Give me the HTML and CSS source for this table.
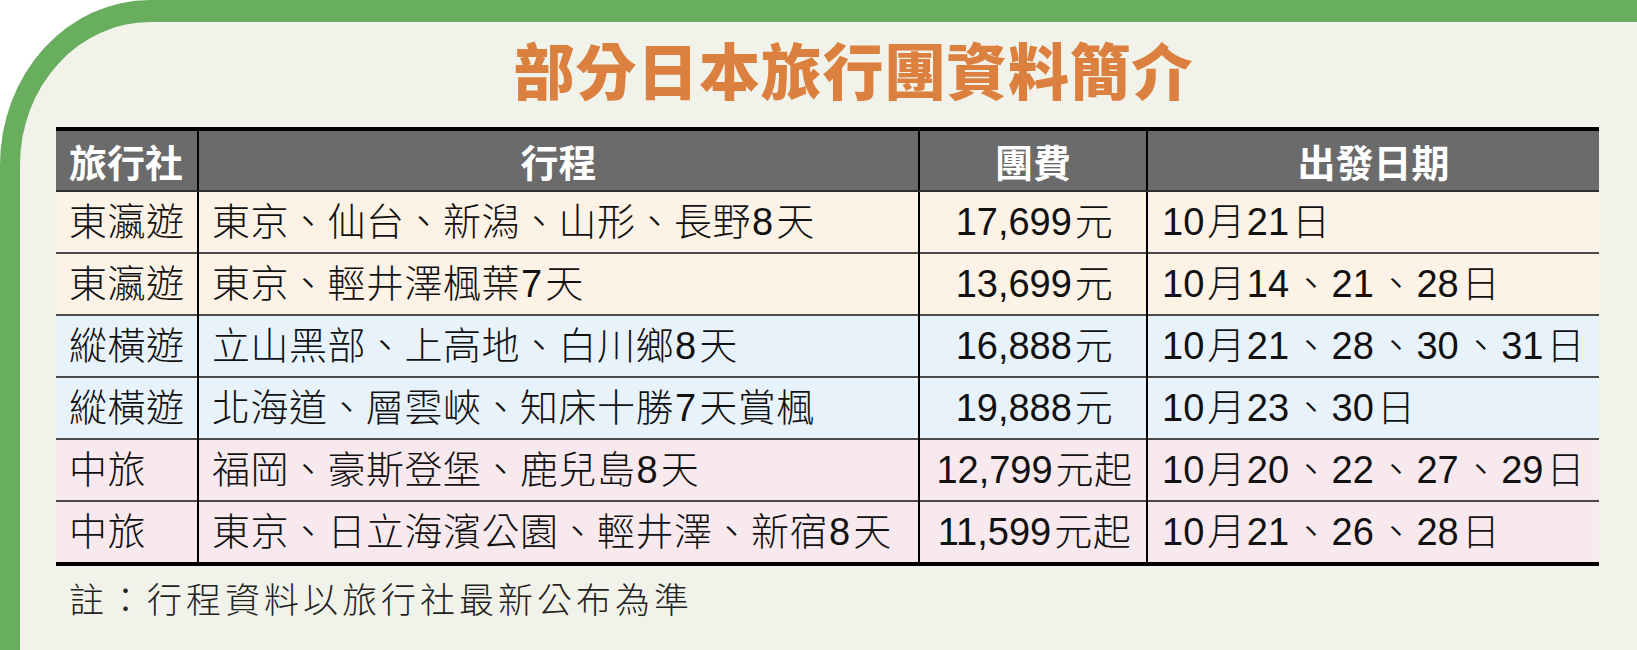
FILE: index.html
```html
<!DOCTYPE html>
<html lang="zh-Hant">
<head>
<meta charset="utf-8">
<title>部分日本旅行團資料簡介</title>
<link rel="stylesheet" href="styles.css">
</head>
<body>
<div class="frame">
  <h1 class="title">部分日本旅行團資料簡介</h1>
  <table class="tours">
    <colgroup>
      <col class="c-agency">
      <col class="c-route">
      <col class="c-fee">
      <col class="c-date">
    </colgroup>
    <thead>
      <tr>
        <th class="left">旅行社</th>
        <th>行程</th>
        <th>團費</th>
        <th>出發日期</th>
      </tr>
    </thead>
    <tbody>
      <tr class="cream">
        <td>東瀛遊</td>
        <td>東京、仙台、新潟、山形、長野<span class="n">8</span>天</td>
        <td class="fee"><span class="n">17,699</span>元</td>
        <td><span class="n">10</span>月<span class="n">21</span>日</td>
      </tr>
      <tr class="cream">
        <td>東瀛遊</td>
        <td>東京、輕井澤楓葉<span class="n">7</span>天</td>
        <td class="fee"><span class="n">13,699</span>元</td>
        <td><span class="n">10</span>月<span class="n">14</span>、<span class="n">21</span>、<span class="n">28</span>日</td>
      </tr>
      <tr class="blue">
        <td>縱橫遊</td>
        <td>立山黑部、上高地、白川鄉<span class="n">8</span>天</td>
        <td class="fee"><span class="n">16,888</span>元</td>
        <td><span class="n">10</span>月<span class="n">21</span>、<span class="n">28</span>、<span class="n">30</span>、<span class="n">31</span>日</td>
      </tr>
      <tr class="blue">
        <td>縱橫遊</td>
        <td>北海道、層雲峽、知床十勝<span class="n">7</span>天賞楓</td>
        <td class="fee"><span class="n">19,888</span>元</td>
        <td><span class="n">10</span>月<span class="n">23</span>、<span class="n">30</span>日</td>
      </tr>
      <tr class="pink">
        <td>中旅</td>
        <td>福岡、豪斯登堡、鹿兒島<span class="n">8</span>天</td>
        <td class="fee"><span class="n">12,799</span>元起</td>
        <td><span class="n">10</span>月<span class="n">20</span>、<span class="n">22</span>、<span class="n">27</span>、<span class="n">29</span>日</td>
      </tr>
      <tr class="pink">
        <td>中旅</td>
        <td>東京、日立海濱公園、輕井澤、新宿<span class="n">8</span>天</td>
        <td class="fee"><span class="n">11,599</span>元起</td>
        <td><span class="n">10</span>月<span class="n">21</span>、<span class="n">26</span>、<span class="n">28</span>日</td>
      </tr>
    </tbody>
  </table>
  <p class="note">註：行程資料以旅行社最新公布為準</p>
</div>
</body>
</html>
```

FILE: styles.css
```css
html, body {
  margin: 0;
  padding: 0;
  background: #ffffff;
}

body {
  width: 1637px;
  height: 650px;
  overflow: hidden;
  font-family: "Liberation Sans", "Noto Sans CJK TC", sans-serif;
}

.frame {
  box-sizing: border-box;
  width: 1637px;
  height: 650px;
  background: #f1f3ea;
  border-top: 22px solid #69ae5f;
  border-left: 20px solid #69ae5f;
  border-top-left-radius: 150px 165px;
  padding: 16px 38px 0 36px;
}

.title {
  margin: 0 0 27px 0;
  height: 62px;
  font-family: "Noto Sans CJK TC", sans-serif;
  font-weight: 900;
  font-size: 61px;
  line-height: 62px;
  letter-spacing: 0.8px;
  color: #dc8040;
  text-align: center;
  padding-left: 52px;
}

.tours {
  width: 1543px;
  border-collapse: collapse;
  table-layout: fixed;
  border-top: 4px solid #000;
  border-bottom: 4px solid #000;
}

.c-agency { width: 142px; }
.c-route { width: 721px; }
.c-fee { width: 228px; }
.c-date { width: 452px; }

.tours th {
  height: 59px;
  padding: 0;
  background: #6b6b6b;
  color: #ffffff;
  font-family: "Noto Sans CJK TC", sans-serif;
  font-weight: 700;
  font-size: 38px;
  line-height: 1;
  text-align: center;
  border-left: 2px solid #000;
  border-bottom: 2px solid #2e2e2e;
}

.tours th.left {
  text-align: left;
  padding-left: 13px;
}

.tours th:first-child,
.tours td:first-child {
  border-left: none;
}

.tours td {
  height: 60px;
  padding: 0 0 0 13px;
  font-size: 38px;
  font-weight: 300;
  line-height: 1;
  letter-spacing: 0.5px;
  color: #111;
  border-left: 2px solid #000;
  border-top: 2px solid #4a4a4a;
  white-space: nowrap;
  vertical-align: middle;
}

.tours td .n {
  font-weight: 400;
  letter-spacing: 0;
  margin: 0 3px 0 1px;
}

.tours td:first-child {
  padding-left: 13px;
}

.tours td.fee {
  text-align: center;
  padding: 0 0 0 2px;
}

.tours tbody tr:first-child td {
  border-top: none;
}

.cream td { background: #fcf2e6; }
.blue td { background: #e8f2fb; }
.pink td { background: #f8e9ee; }

.note {
  margin: 12px 0 0 0;
  padding-left: 13px;
  font-family: "Noto Sans CJK TC", sans-serif;
  font-weight: 300;
  font-size: 35px;
  line-height: 40px;
  letter-spacing: 4px;
  color: #222;
  white-space: nowrap;
}
```
